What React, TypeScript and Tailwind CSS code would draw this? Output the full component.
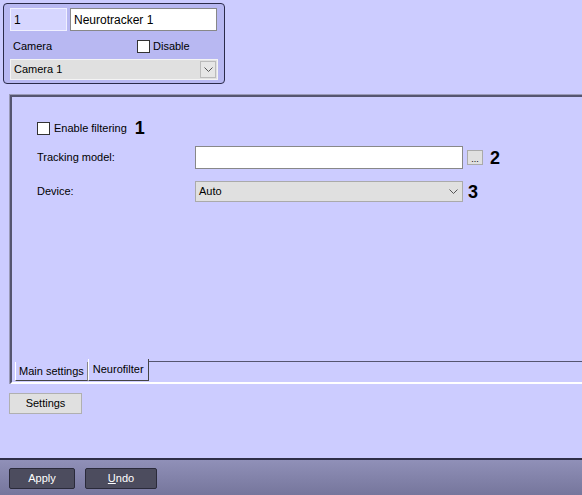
import React from 'react';

const font = { fontFamily: '"Liberation Sans", Arial, sans-serif' };

const Chevron = ({ className = '' }: { className?: string }) => (
  <svg width="9" height="6" viewBox="0 0 9 6" className={className}>
    <path d="M0.5 0.5 L4.5 4.5 L8.5 0.5" fill="none" stroke="#555" strokeWidth="1" />
  </svg>
);

const Check = () => (
  <span className="inline-block w-[13px] h-[13px] bg-white border border-[#333]" />
);

export default function App() {
  return (
    <div className="w-[582px] h-[495px] bg-[#ccccff] flex flex-col overflow-hidden text-[11px] text-black" style={font}>
      {/* Object header */}
      <div className="pt-[3px] pl-[3px]">
        <div className="w-[222px] h-[81px] rounded-[4px] border border-[#2b2b4a] bg-[#b8b8f2] px-[6px] pt-[4px]">
          <div className="flex gap-[3px]">
            <div className="w-[57px] h-[23px] bg-[#d6d6ff] border border-[#f0f0ff] flex items-center px-[3px] text-[12px]">1</div>
            <div className="w-[147px] h-[23px] bg-white border border-[#888] flex items-center px-[3px] text-[12px]">Neurotracker 1</div>
          </div>
          <div className="flex items-center h-[22px] mt-[4px] pl-[3px]">
            <span className="w-[124px]">Camera</span>
            <Check />
            <span className="ml-[3px]">Disable</span>
          </div>
          <div className="mt-[2px] w-[208px] h-[21px] bg-[#e0e0e0] border border-[#f4f4f4] flex items-center">
            <span className="flex-1 pl-[3px]">Camera 1</span>
            <span className="w-[16px] h-[17px] mr-[1px] bg-[#e6e6e6] border border-[#bbb] flex items-center justify-center">
              <Chevron />
            </span>
          </div>
        </div>
      </div>

      {/* Tab panel */}
      <div className="mt-[10px] ml-[9px] h-[290px] flex flex-col border-l border-t border-[#9a9ab8]">
        <div className="flex-1 border-l-2 border-t-2 border-[#555570] relative">
          <div className="pl-[25px] pt-[21px]">
            <div className="flex items-center h-[20px]">
              <Check />
              <span className="ml-[4px]">Enable filtering</span>
              <span className="ml-[8px] text-[18px] font-bold leading-none">1</span>
            </div>
            <div className="flex items-center mt-[8px] h-[23px]">
              <span className="w-[158px]">Tracking model:</span>
              <div className="w-[268px] h-[23px] bg-white border border-[#888]" />
              <span className="ml-[4px] w-[16px] h-[15px] bg-[#e0e0e0] border border-[#aaa] text-[9px] leading-[10px] flex items-end justify-center">...</span>
              <span className="ml-[7px] text-[18px] font-bold leading-none">2</span>
            </div>
            <div className="flex items-center mt-[12px] h-[21px]">
              <span className="w-[158px]">Device:</span>
              <div className="w-[268px] h-[21px] bg-[#e0e0e0] border border-[#aaa] flex items-center">
                <span className="flex-1 pl-[3px]">Auto</span>
                <Chevron className="mr-[4px]" />
              </div>
              <span className="ml-[5px] text-[18px] font-bold leading-none">3</span>
            </div>
          </div>
        </div>
        <div className="h-[23px] flex items-start border-l-2 border-[#555570] border-b-2 border-b-white">
          <div className="ml-[3px] mt-[1px] h-[19px] px-[3px] bg-[#ccccff] border-l border-l-white border-b border-b-[#444] border-r border-r-[#888] flex items-center">Main settings</div>
          <div className="-mt-[2px] h-[22px] px-[4px] bg-[#ccccff] border-l border-l-white border-b border-b-[#444] border-r border-r-[#444] flex items-center">Neurofilter</div>
          <div className="flex-1 border-t border-[#555570]" />
        </div>
      </div>

      <div className="mt-[9px] ml-[9px]">
        <div className="w-[73px] h-[21px] bg-[#e0e0e0] border border-[#b0b0b0] flex items-center justify-center">Settings</div>
      </div>

      <div className="flex-1" />

      {/* Bottom bar */}
      <div className="h-[37px] border-t-2 border-[#2e2e48] bg-gradient-to-b from-[#9090b8] to-[#76769c] flex items-center gap-[10px] pl-[9px] pt-[1px]">
        <div className="w-[66px] h-[21px] rounded-[2px] bg-[#4c4c5e] border border-[#2a2a3a] text-white flex items-center justify-center">Apply</div>
        <div className="w-[72px] h-[21px] rounded-[2px] bg-[#4c4c5e] border border-[#2a2a3a] text-white flex items-center justify-center">
          <span><span className="underline">U</span>ndo</span>
        </div>
      </div>
    </div>
  );
}
